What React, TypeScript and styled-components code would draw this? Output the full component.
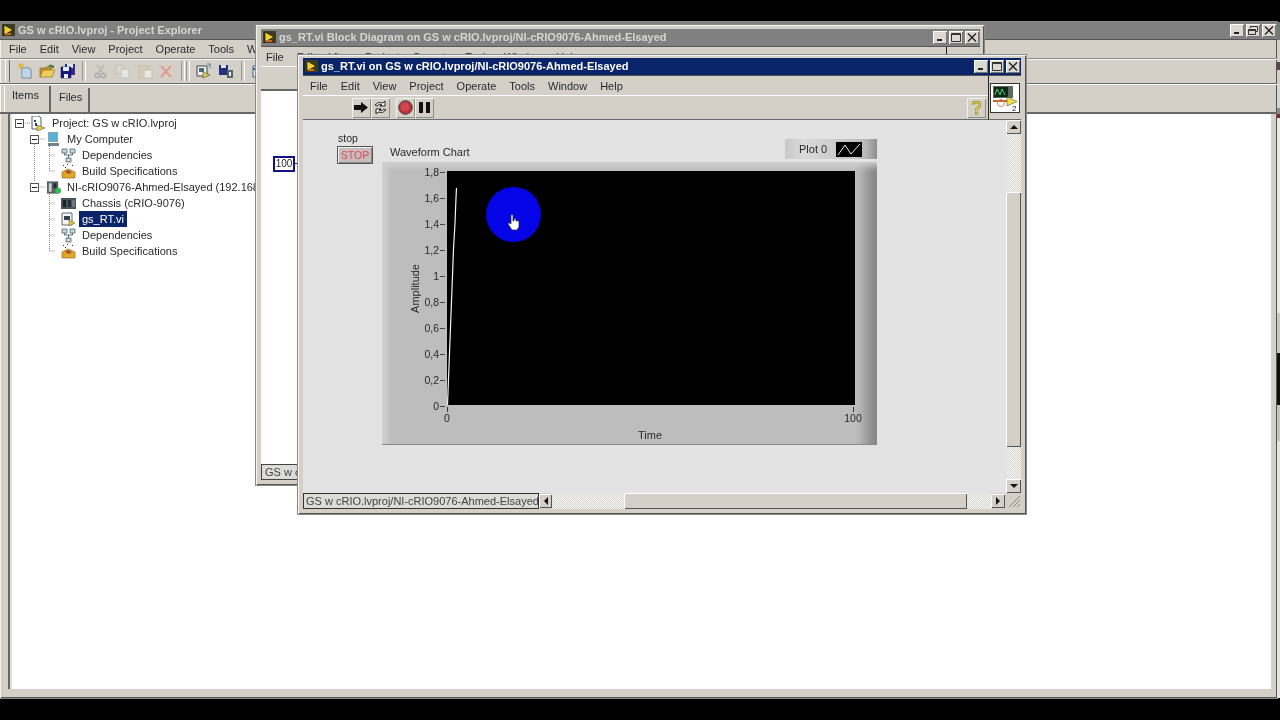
import * as React from "react"

import styled, { createGlobalStyle, css } from "styled-components"

const FACE = "#d4d0c8"
const raised = css`
  background: ${FACE};
  box-shadow: inset 1px 1px 0 #fff, inset -1px -1px 0 #555;
`
const dither = css`
  background: repeating-conic-gradient(#d8d6d0 0 25%, #f6f6f4 0 50%) 0 0 / 2px 2px;
`

const Global = createGlobalStyle`
  html, body { margin: 0; padding: 0; background: #000; overflow: hidden; }
  body { font-family: "Liberation Sans", Arial, sans-serif; font-size: 11px; color: #2a2a2a; }
`

const Desktop = styled.div`
  position: relative;
  width: 1280px;
  height: 720px;
  background: #000;
  overflow: hidden;
  filter: blur(0.35px);
`

const Win = styled.div<{ $x: number; $y: number; $w: number; $h: number; $pad: string }>`
  position: absolute;
  left: ${p => p.$x}px;
  top: ${p => p.$y}px;
  width: ${p => p.$w}px;
  height: ${p => p.$h}px;
  padding: ${p => p.$pad};
  box-sizing: border-box;
  display: flex;
  flex-direction: column;
  background: ${FACE};
  box-shadow: inset 1px 1px 0 #f4f4f0, inset -1px -1px 0 #555, 0 0 0 1px #8a8a88;
`

const TitleBar = styled.div<{ $active?: boolean }>`
  flex: none;
  height: 18px;
  display: flex;
  align-items: center;
  gap: 3px;
  padding: 0 1px 1px 2px;
  box-sizing: border-box;
  background: ${p => (p.$active ? "#0a246a" : "#808080")};
  color: ${p => (p.$active ? "#fff" : "#d6d6d2")};
  font-weight: bold;
  white-space: nowrap;
  border-bottom: 1px solid #555;
`

const TitleText = styled.span`
  flex: 1;
  overflow: hidden;
`

const WinButtons = styled.div`
  display: flex;
  gap: 2px;
`

const WinBtn = styled.div`
  background: #dcd9d2;
  box-shadow: inset 1px 1px 0 #fff, inset -1px -1px 0 #777;
  width: 14px;
  height: 13px;
  display: flex;
  align-items: center;
  justify-content: center;
`

const MenuBar = styled.div<{ $h: number; $pad: number }>`
  flex: none;
  height: ${p => p.$h}px;
  display: flex;
  align-items: center;
  gap: 13px;
  padding-left: ${p => p.$pad}px;
  white-space: nowrap;
  overflow: hidden;
`

const Strip = styled.div<{ $h: number }>`
  flex: none;
  height: ${p => p.$h}px;
  box-sizing: border-box;
  display: flex;
  align-items: center;
  border-top: 1px solid #fff;
  border-bottom: 1px solid #6a6a6a;
`

const ProjectStrip = styled(Strip)`
  border-top-color: #8e8c86;
  box-shadow: inset 0 1px 0 #f6f6f2;
`

const Grip = styled.div`
  width: 3px;
  height: 22px;
  margin: 0 8px 0 5px;
  border-left: 1px solid #fff;
  border-right: 1px solid #666;
`

const Sep = styled.div<{ $l: number; $r: number }>`
  width: 2px;
  height: 20px;
  margin: 0 ${p => p.$r}px 0 ${p => p.$l}px;
  border-left: 1px solid #999;
  border-right: 1px solid #fff;
`

const ToolSlot = styled.div<{ $gap: number }>`
  display: flex;
  margin-right: ${p => p.$gap}px;
`

const Tabs = styled.div`
  flex: none;
  height: 30px;
  box-sizing: border-box;
  display: flex;
  align-items: flex-start;
  padding: 1px 0 0 4px;
  border-top: 1px solid #fff;
  border-bottom: 2px solid #666;
`

const Tab = styled.div<{ $w: number; $on?: boolean }>`
  width: ${p => p.$w}px;
  height: 26px;
  box-sizing: border-box;
  margin-top: ${p => (p.$on ? 0 : 2)}px;
  padding: ${p => (p.$on ? "2px 0 0 7px" : "2px 0 0 8px")};
  border-left: ${p => (p.$on ? "1px solid #fff" : "0")};
  border-right: 2px solid #666;
  line-height: 14px;
`

const TreePane = styled.div`
  position: relative;
  flex: 1;
  margin: 0 6px 9px 8px;
  padding: 1px 0 0 5px;
  background: #fff;
  border-left: 2px solid #666;
  box-shadow: inset 2px 0 0 #e0e0dc;
`

const TreeLines = styled.svg`
  position: absolute;
  left: -2px;
  top: 1px;
`

const TreeRow = styled.div<{ $depth: number }>`
  position: relative;
  height: 16px;
  display: flex;
  align-items: center;
  padding-left: ${p => p.$depth * 15}px;
  white-space: nowrap;
`

const Expander = styled.div`
  flex: none;
  width: 16px;
  display: flex;
`

const ExpBox = styled.div`
  width: 9px;
  height: 9px;
  box-sizing: border-box;
  border: 1px solid #555;
  background: #fff;
  display: flex;
  align-items: center;
  justify-content: center;
  &::after {
    content: "";
    width: 5px;
    height: 1px;
    background: #222;
  }
`

const TreeIcon = styled.div`
  flex: none;
  width: 15px;
  margin-right: 6px;
  display: flex;
`

const TreeLabel = styled.span<{ $sel?: boolean }>`
  ${p =>
    p.$sel &&
    css`
      background: #0a246a;
      color: #fff;
      margin-left: -3px;
      padding: 2px 3px;
    `}
`

const DiagramMain = styled.div`
  position: relative;
  flex: 1;
  background: #fff;
  border-top: 1px solid #666;
`

const Constant = styled.div`
  position: absolute;
  left: 12px;
  top: 65px;
  width: 22px;
  height: 16px;
  box-sizing: border-box;
  border: 2px solid #10108a;
  background: #fff;
  text-align: center;
  font-size: 10px;
  line-height: 12px;
  &::after {
    content: "";
    position: absolute;
    right: -5px;
    top: 5px;
    width: 3px;
    height: 1px;
    background: #10108a;
  }
`

const DiagramStatus = styled.div`
  flex: none;
  height: 16px;
  box-sizing: border-box;
  padding-left: 3px;
  background: #dcdcd8;
  border: 1px solid #444;
  border-width: 1px 0 1px 1px;
  line-height: 14px;
  white-space: nowrap;
  color: #444;
`

const MenuTick = styled.div`
  position: absolute;
  right: 33px;
  top: 0;
  width: 1px;
  height: 19px;
  background: #222;
`

const DiagramMenu = styled.div`
  position: relative;
  flex: none;
`

const PanelHead = styled.div`
  flex: none;
  display: flex;
`

const PanelBars = styled.div`
  flex: 1;
`

const RunButton = styled.div`
  width: 19px;
  height: 20px;
  display: flex;
  align-items: center;
  justify-content: center;
  background: ${FACE};
  box-shadow: inset 1px 1px 0 #f2f2ee, inset -1px -1px 0 #8c8c88;
`

const RunGroup = styled.div`
  display: flex;
  margin-left: 6px;
`

const RunTools = styled.div`
  flex: 1;
  display: flex;
  padding-left: 49px;
`

const HelpButton = styled(RunButton)`
  margin-right: 2px;
`

const IconColumn = styled.div`
  flex: none;
  width: 33px;
  box-sizing: border-box;
  border-left: 1px solid #222;
  border-bottom: 1px solid #6a6a6a;
  padding: 7px 0 0 1px;
`

const ViIcon = styled.div`
  width: 30px;
  height: 30px;
  background: #fff;
  border: 1px solid #333;
  box-sizing: border-box;
`

const PanelBody = styled.div`
  flex: 1;
  min-height: 0;
  display: flex;
`

const Canvas = styled.div`
  flex: 1;
  display: flex;
  align-items: flex-start;
  padding: 12px 0 0 34px;
  background: #e3e3e3;
`

const StopControl = styled.div`
  flex: none;
  width: 45px;
`

const StopLabel = styled.div`
  line-height: 12px;
  font-size: 10.5px;
  margin: 0 0 2px 1px;
`

const StopButton = styled.div`
  width: 36px;
  height: 18px;
  box-sizing: border-box;
  border: 1px solid #555;
  background: #c8bcbc;
  box-shadow: inset 1px 1px 0 #f0f0f0, inset -1px -1px 0 #888;
  color: #d8505c;
  text-align: center;
  font-size: 10.5px;
  line-height: 17px;
`

const ChartColumn = styled.div`
  flex: none;
  width: 495px;
  margin-top: 7px;
`

const ChartHeader = styled.div`
  height: 23px;
  display: flex;
  justify-content: space-between;
  align-items: flex-start;
`

const ChartName = styled.div`
  margin: 7px 0 0 8px;
  line-height: 13px;
`

const Legend = styled.div`
  width: 92px;
  height: 20px;
  box-sizing: border-box;
  padding-left: 14px;
  display: flex;
  align-items: center;
  gap: 9px;
  background: linear-gradient(90deg, #c8c8c8, #dadada 20%, #c4c4c4 75%, #b8b8b8 88%, #8e8e8e);
`

const LegendSwatch = styled.svg`
  display: block;
`

const ChartPanel = styled.div`
  height: 283px;
  box-sizing: border-box;
  padding-top: 9px;
  display: grid;
  grid-template-columns: 65px 408px;
  grid-template-rows: 234px 1fr;
  background:
    linear-gradient(90deg, #d2d2d2, #bdbdbd 10px, #bdbdbd 473px, #b4b4b4 478px, #808080 495px);
  border-bottom: 1px solid #888;
  box-shadow: inset 0 8px 6px -4px #d0d0d0;
`

const YAxis = styled.div`
  display: flex;
  padding-left: 27px;
`

const AxisTitle = styled.div`
  flex: none;
  align-self: center;
  width: 13px;
  writing-mode: vertical-rl;
  transform: rotate(180deg);
  line-height: 13px;
`

const YTicks = styled.div`
  flex: 1;
  height: 246px;
  margin-top: -5px;
  padding-right: 2px;
  display: flex;
  flex-direction: column;
  justify-content: space-between;
`

const YTick = styled.div`
  height: 12px;
  line-height: 12px;
  font-size: 10.5px;
  display: flex;
  justify-content: flex-end;
  align-items: center;
  gap: 1px;
  &::after {
    content: "";
    width: 5px;
    height: 1px;
    background: #444;
  }
`

const Plot = styled.svg`
  display: block;
  background: #000;
`

const XAxis = styled.div`
  grid-column: 2;
`

const XMarks = styled.div`
  display: flex;
  justify-content: space-between;
  padding-right: 2px;
  height: 20px;
`

const XMark = styled.div`
  width: 0;
  display: flex;
  flex-direction: column;
  align-items: center;
  font-size: 10.5px;
  line-height: 12px;
  &::before {
    content: "";
    flex: none;
    width: 1px;
    height: 5px;
    margin: 2px 0 0;
    background: #333;
  }
`

const XTitle = styled.div`
  text-align: center;
  margin: 4px 0 0 -2px;
  line-height: 13px;
`

const VScroll = styled.div`
  flex: none;
  width: 15px;
  display: flex;
  flex-direction: column;
  background: ${FACE};
`

const Track = styled.div<{ $grow?: number }>`
  ${dither};
  flex: ${p => p.$grow ?? 1};
`

const ScrollBtn = styled.div<{ $side?: number }>`
  ${raised};
  flex: none;
  width: ${p => p.$side ?? 14}px;
  height: 14px;
  display: flex;
  align-items: center;
  justify-content: center;
`

const VThumb = styled.div`
  ${raised};
  flex: none;
  height: 255px;
`

const HScroll = styled.div`
  flex: none;
  height: 16px;
  display: flex;
  align-items: center;
  background: ${FACE};
`

const PathLabel = styled.div`
  flex: none;
  width: 236px;
  height: 16px;
  box-sizing: border-box;
  padding-left: 2px;
  border: 1px solid #333;
  background: #dcdcd8;
  line-height: 14px;
  white-space: nowrap;
  overflow: hidden;
  color: #444;
`

const HTrack = styled.div<{ $w: number }>`
  ${dither};
  flex: none;
  width: ${p => p.$w}px;
  height: 16px;
`

const HThumb = styled.div`
  ${raised};
  flex: none;
  width: 343px;
  height: 16px;
`

const Corner = styled.svg`
  display: block;
  flex: none;
  margin-left: auto;
`

const Spot = styled.div`
  position: absolute;
  left: 486px;
  top: 187px;
  width: 55px;
  height: 55px;
  border-radius: 50%;
  background: #0404e6;
  display: flex;
  align-items: center;
  justify-content: center;
`

const Cursor = styled.svg`
  display: block;
  margin: 15px 0 0 1px;
`

const EdgeStrip = styled.div`
  position: absolute;
  left: 1277px;
  top: 22px;
  width: 3px;
  height: 676px;
  display: flex;
  flex-direction: column;
`

const EdgeBand = styled.div<{ $h: number; $c: string }>`
  flex: none;
  height: ${p => p.$h}px;
  background: ${p => p.$c};
`

const Ic = ({ children, w = 15, h = 15 }: { children: React.ReactNode; w?: number; h?: number }) => (
  <svg width={w} height={h} viewBox={`0 0 ${w} ${h}`} style={{ display: "block" }}>
    {children}
  </svg>
)

const LvLogo = () => (
  <Ic w={13} h={12}>
    <rect width="13" height="12" fill="#3c3c20" />
    <path d="M2 1l9 5-9 5z" fill="#f0d030" stroke="#000" strokeWidth=".6" />
    <path d="M3 9h6v2H3z" fill="#c86a20" />
  </Ic>
)

const MinGlyph = () => (
  <Ic w={8} h={8}>
    <rect x="1" y="6" width="5" height="2" fill="#222" />
  </Ic>
)
const MaxGlyph = () => (
  <Ic w={10} h={9}>
    <path d="M.5 .5h9v8h-9zM.5 1.500h9" fill="none" stroke="#333" />
  </Ic>
)
const RestoreGlyph = () => (
  <Ic w={10} h={9}>
    <path d="M2.500 2V.5h7v5H8M.5 3.500h7v5h-7zM.5 4.500h7" fill="none" stroke="#333" />
  </Ic>
)
const CloseGlyph = () => (
  <Ic w={10} h={9}>
    <path d="M1 .5l8 8M9 .5l-8 8" stroke="#222" strokeWidth="1.4" />
  </Ic>
)

const Buttons = ({ restore }: { restore?: boolean }) => (
  <WinButtons>
    <WinBtn>
      <MinGlyph />
    </WinBtn>
    <WinBtn>{restore ? <RestoreGlyph /> : <MaxGlyph />}</WinBtn>
    <WinBtn>
      <CloseGlyph />
    </WinBtn>
  </WinButtons>
)

const NewIcon = () => (
  <Ic w={16} h={16}>
    <path d="M4 5h7l2 2v8H4z" fill="#fff" stroke="#5a7c98" />
    <path d="M5 6h7v8H5z" fill="#bcd8ec" />
    <path d="M3 0v6M0 3h6M1 1l4 4M5 1L1 5" stroke="#e0b020" />
  </Ic>
)
const OpenIcon = () => (
  <Ic w={16} h={16}>
    <path d="M1 5h5l1-1h5v3H5L2 14H1z" fill="#c89a30" stroke="#7c5c14" strokeWidth=".6" />
    <path d="M4 7h12l-3 7H1z" fill="#f0cc60" stroke="#8a6a18" strokeWidth=".6" />
    <path d="M9 3q3-3 5 0l1-1v3h-3l1-1q-2-1-3 0" fill="#3c7a3c" />
  </Ic>
)
const SaveIcon = () => (
  <Ic w={16} h={16}>
    <path d="M5 1h10v11H5z" fill="#30308a" />
    <path d="M7 1h6v4H7z" fill="#dfe6f4" />
    <path d="M1 4h10v11H1z" fill="#181880" stroke="#0c0c50" strokeWidth=".5" />
    <path d="M3 4h6v4H3zM4 11h4v4H4z" fill="#e4ecf8" />
  </Ic>
)
const CutIcon = () => (
  <Ic w={13} h={15}>
    <path d="M3 1l6 8M10 1L4 9" stroke="#b8b8b8" strokeWidth="1.4" />
    <circle cx="3.5" cy="11.5" r="2.2" fill="none" stroke="#a8a8a8" strokeWidth="1.3" />
    <circle cx="9.5" cy="11.5" r="2.2" fill="none" stroke="#a8a8a8" strokeWidth="1.3" />
  </Ic>
)
const CopyIcon = () => (
  <Ic w={15} h={15}>
    <path d="M1 1h7v9H1z" fill="#dcd9d2" stroke="#c4c0b8" />
    <path d="M6 5h8v9H6z" fill="#e8e6e0" stroke="#c4c0b8" />
  </Ic>
)
const PasteIcon = () => (
  <Ic w={15} h={15}>
    <path d="M1 2h9v12H1z" fill="#d6ceb8" stroke="#c4bca8" />
    <path d="M6 6h8v8H6z" fill="#ebe8e2" stroke="#c4c0b8" />
  </Ic>
)
const DeleteIcon = () => (
  <Ic w={14} h={15}>
    <path d="M2 2l10 11M12 2L2 13" stroke="#e49a90" strokeWidth="2" />
  </Ic>
)
const DeployIcon = () => (
  <Ic w={16} h={16}>
    <path d="M1 3h10v10H1z" fill="#f0f0f0" stroke="#445" />
    <path d="M3 5h5v4H3z" fill="#4a6a7a" />
    <path d="M7 9l7 3-7 3z" fill="#e8d040" stroke="#333" strokeWidth=".5" />
    <path d="M11 1h3v4" fill="none" stroke="#4878a0" />
  </Ic>
)
const SaveBuildIcon = () => (
  <Ic w={16} h={16}>
    <path d="M1 2h9v10H1z" fill="#24307e" />
    <path d="M3 2h5v3H3z" fill="#dfe6f4" />
    <path d="M9 7h6v8H9z" fill="#566" />
    <path d="M11 9h2v4h-2z" fill="#eee" />
  </Ic>
)
const GridIcon = () => (
  <Ic w={14} h={15}>
    <path d="M1 2h11v11H1z" fill="#e8eef6" stroke="#345a88" />
    <path d="M1 5h11" stroke="#345a88" strokeWidth="2" />
    <path d="M4 8h2v2H4zM8 8h2v2H8z" fill="#345a88" />
  </Ic>
)

const ProjectIcon = () => (
  <Ic>
    <path d="M1 0h7l2 2v11H1z" fill="#fff" stroke="#4c5c78" />
    <path d="M3 4h2v2H3zM4 7h2v3H4z" fill="#27408a" />
    <path d="M6 9l8 3-8 3z" fill="#e8d030" stroke="#444" strokeWidth=".5" />
  </Ic>
)
const ComputerIcon = () => (
  <Ic>
    <rect x="2" y="0" width="10" height="10" fill="#8ca4b8" />
    <rect x="3" y="1" width="8" height="8" fill="#58b0d8" />
    <path d="M2 11h11v3H2z" fill="#70808c" />
  </Ic>
)
const DepsIcon = () => (
  <Ic>
    <path d="M1 1h5v4H1zM9 1h5v4H9zM5 10h5v4H5z" fill="#bcdcd8" stroke="#567" strokeWidth=".8" />
    <path d="M3.500 5v2h8V5M7.500 7v3" fill="none" stroke="#567" />
  </Ic>
)
const BuildIcon = () => (
  <Ic>
    <path d="M1 8l6-3 7 3v6H1z" fill="#e0a828" stroke="#8a6014" strokeWidth=".6" />
    <path d="M4 8l3-2 4 2-3 2z" fill="#b04838" />
    <path d="M2 1h1v1H2zM6 0h1v1H6zM11 1h1v1h-1zM4 3h1v1H4z" fill="#224" />
  </Ic>
)
const TargetIcon = () => (
  <Ic w={16} h={15}>
    <rect x="1" y="1" width="12" height="13" fill="#56605c" />
    <rect x="3" y="3" width="3" height="9" fill="#c8d0cc" />
    <rect x="8" y="3" width="3" height="5" fill="#20282c" />
    <circle cx="13" cy="11" r="3.2" fill="#2cc04c" />
  </Ic>
)
const ChassisIcon = () => (
  <Ic>
    <rect x="0" y="2" width="15" height="11" fill="#48545c" />
    <rect x="2" y="4" width="3" height="7" fill="#182024" />
    <rect x="7" y="4" width="3" height="7" fill="#283034" />
    <rect x="11" y="4" width="3" height="7" fill="#6c787c" />
  </Ic>
)
const ViTreeIcon = () => (
  <Ic>
    <path d="M1 1h10v12H1z" fill="#f4f4f4" stroke="#667" />
    <path d="M3 4h6v4H3z" fill="#38404c" />
    <path d="M8 8l6 3-6 3z" fill="#e8c830" stroke="#555" strokeWidth=".5" />
  </Ic>
)

const Triangle = ({ dir }: { dir: "up" | "down" | "left" | "right" }) => {
  const d = {
    up: "M4 1l4 4H0z",
    down: "M0 1h8L4 5z",
    left: "M5 0v8L1 4z",
    right: "M1 0l4 4-4 4z",
  }[dir]
  const v = dir === "up" || dir === "down"
  return (
    <Ic w={v ? 8 : 6} h={v ? 6 : 8}>
      <path d={d} fill="#111" />
    </Ic>
  )
}

const yLabels = ["1,8", "1,6", "1,4", "1,2", "1", "0,8", "0,6", "0,4", "0,2", "0"]

const tree = [
  { depth: 0, open: true, icon: <ProjectIcon />, label: "Project: GS w cRIO.lvproj" },
  { depth: 1, open: true, icon: <ComputerIcon />, label: "My Computer" },
  { depth: 2, icon: <DepsIcon />, label: "Dependencies" },
  { depth: 2, icon: <BuildIcon />, label: "Build Specifications" },
  { depth: 1, open: true, icon: <TargetIcon />, label: "NI-cRIO9076-Ahmed-Elsayed (192.168.1.2)" },
  { depth: 2, icon: <ChassisIcon />, label: "Chassis (cRIO-9076)" },
  { depth: 2, sel: true, icon: <ViTreeIcon />, label: "gs_RT.vi" },
  { depth: 2, icon: <DepsIcon />, label: "Dependencies" },
  { depth: 2, icon: <BuildIcon />, label: "Build Specifications" },
]

const menus = ["File", "Edit", "View", "Project", "Operate", "Tools", "Window", "Help"]

const edge: [number, string][] = [
  [18, "#6f7a70"],
  [22, "#d4d0c8"],
  [8, "#5a4a50"],
  [14, "#d4d0c8"],
  [24, "#d8d6d0"],
  [6, "#8a8a88"],
  [4, "#7a2a3a"],
  [195, "#eceae6"],
  [40, "#c8c8c8"],
  [52, "#111"],
  [36, "#c4c4c4"],
  [257, "#e4e4e4"],
]

export default function App() {
  return (
    <Desktop>
      <Global />
      <Win $x={0} $y={22} $w={1277} $h={676} $pad="0 0 0 0">
        <TitleBar>
          <LvLogo />
          <TitleText>GS w cRIO.lvproj - Project Explorer</TitleText>
          <Buttons restore />
        </TitleBar>
        <MenuBar $h={18} $pad={9}>
          {menus.map(m => (
            <span key={m}>{m}</span>
          ))}
        </MenuBar>
        <ProjectStrip $h={26}>
          <Grip />
          <ToolSlot $gap={5}>
            <NewIcon />
          </ToolSlot>
          <ToolSlot $gap={5}>
            <OpenIcon />
          </ToolSlot>
          <ToolSlot $gap={0}>
            <SaveIcon />
          </ToolSlot>
          <Sep $l={6} $r={8} />
          <ToolSlot $gap={8}>
            <CutIcon />
          </ToolSlot>
          <ToolSlot $gap={8}>
            <CopyIcon />
          </ToolSlot>
          <ToolSlot $gap={6}>
            <PasteIcon />
          </ToolSlot>
          <ToolSlot $gap={0}>
            <DeleteIcon />
          </ToolSlot>
          <Sep $l={8} $r={1} />
          <Sep $l={0} $r={6} />
          <ToolSlot $gap={6}>
            <DeployIcon />
          </ToolSlot>
          <ToolSlot $gap={0}>
            <SaveBuildIcon />
          </ToolSlot>
          <Sep $l={7} $r={7} />
          <GridIcon />
        </ProjectStrip>
        <Tabs>
          <Tab $w={47} $on>
            Items
          </Tab>
          <Tab $w={39}>Files</Tab>
        </Tabs>
        <TreePane>
          <TreeLines width="60" height="145">
            <path
              d="M26.500 29V67M41.500 29V56H47M41.500 40H47M41.500 77V136H47M41.500 88H47M41.500 104H47M41.500 120H47M17 8h6M31.500 24h6M31.500 72h6"
              fill="none"
              stroke="#888"
              strokeDasharray="1 1"
            />
          </TreeLines>
          {tree.map(row => (
            <TreeRow key={row.label + row.depth + row.sel} $depth={row.depth}>
              <Expander>{row.open && <ExpBox />}</Expander>
              <TreeIcon>{row.icon}</TreeIcon>
              <TreeLabel $sel={row.sel}>{row.label}</TreeLabel>
            </TreeRow>
          ))}
        </TreePane>
      </Win>

      <EdgeStrip>
        {edge.map(([h, c], i) => (
          <EdgeBand key={i} $h={h} $c={c} />
        ))}
      </EdgeStrip>

      <Win $x={256} $y={25} $w={728} $h={460} $pad="4px 4px 5px 5px">
        <TitleBar>
          <LvLogo />
          <TitleText>gs_RT.vi Block Diagram on GS w cRIO.lvproj/NI-cRIO9076-Ahmed-Elsayed</TitleText>
          <Buttons />
        </TitleBar>
        <DiagramMenu>
          <MenuBar $h={19} $pad={5}>
            {menus.map(m => (
              <span key={m}>{m}</span>
            ))}
          </MenuBar>
          <MenuTick />
        </DiagramMenu>
        <Strip $h={24} />
        <DiagramMain>
          <Constant>100</Constant>
        </DiagramMain>
        <DiagramStatus>GS w cRIO.lvproj/NI-cRIO9076-Ahmed-Elsayed</DiagramStatus>
      </Win>

      <Win $x={298} $y={55} $w={728} $h={459} $pad="3px 5px 5px 5px">
        <TitleBar $active>
          <LvLogo />
          <TitleText>gs_RT.vi on GS w cRIO.lvproj/NI-cRIO9076-Ahmed-Elsayed</TitleText>
          <Buttons />
        </TitleBar>
        <PanelHead>
          <PanelBars>
            <MenuBar $h={19} $pad={7}>
              {menus.map(m => (
                <span key={m}>{m}</span>
              ))}
            </MenuBar>
            <Strip $h={25}>
              <RunTools>
                <RunButton>
                  <Ic w={17} h={13}>
                    <path d="M1 4h7V1l7 5.500L8 12V9H1z" fill="#111" />
                  </Ic>
                </RunButton>
                <RunButton>
                  <Ic w={15} h={15}>
                    <path d="M2 5q3-4 8-2l2-2v5H7l2-1q-3-2-5 1zM13 10q-3 4-8 2l-2 2V9h5l-2 1q3 2 5-1z" fill="#fff" stroke="#111" strokeWidth=".9" />
                  </Ic>
                </RunButton>
                <RunGroup>
                  <RunButton>
                    <Ic w={15} h={15}>
                      <circle cx="7.500" cy="7.500" r="6.800" fill="#b83038" stroke="#444" />
                      <circle cx="7" cy="7" r="4.500" fill="#d04650" />
                    </Ic>
                  </RunButton>
                  <RunButton>
                    <Ic w={11} h={11}>
                      <path d="M0 0h4v11H0zM7 0h4v11H7z" fill="#111" />
                    </Ic>
                  </RunButton>
                </RunGroup>
              </RunTools>
              <HelpButton>
                <Ic w={11} h={15}>
                  <path d="M2 5q0-3 3.500-3T9 5q0 2-2 2.800L5.500 9v2" fill="none" stroke="#8a8620" strokeWidth="2.400" />
                  <path d="M2 5q0-3 3.500-3T9 5q0 2-2 2.800L5.500 9v2" fill="none" stroke="#f0e040" strokeWidth="1.100" />
                  <rect x="4.300" y="12" width="2.500" height="2.500" fill="#d8c830" stroke="#776" strokeWidth=".5" />
                </Ic>
              </HelpButton>
            </Strip>
          </PanelBars>
          <IconColumn>
            <ViIcon>
              <Ic w={28} h={28}>
                <rect x="2" y="2" width="20" height="12" fill="#5c6a5c" />
                <rect x="3" y="3" width="14" height="10" fill="#0e2a14" />
                <path d="M4 11l2-6 3 6 2-6 3 6" fill="none" stroke="#58c878" />
                <path d="M2 17h15" stroke="#c86020" strokeWidth="2" />
                <circle cx="10" cy="19" r="3.500" fill="none" stroke="#d08080" />
                <path d="M16 13l10 4.500L16 22z" fill="#f0e040" stroke="#555" strokeWidth=".6" />
                <text x="21" y="27" fontSize="8" fill="#222" fontFamily="Liberation Sans">2</text>
              </Ic>
            </ViIcon>
          </IconColumn>
        </PanelHead>
        <PanelBody>
          <Canvas>
            <StopControl>
              <StopLabel>stop</StopLabel>
              <StopButton>STOP</StopButton>
            </StopControl>
            <ChartColumn>
              <ChartHeader>
                <ChartName>Waveform Chart</ChartName>
                <Legend>
                  <span>Plot 0</span>
                  <LegendSwatch width="26" height="15">
                    <rect width="26" height="15" fill="#000" />
                    <path d="M2 13L9 3l6 9 9-10" fill="none" stroke="#eee" />
                  </LegendSwatch>
                </Legend>
              </ChartHeader>
              <ChartPanel>
                <YAxis>
                  <AxisTitle>Amplitude</AxisTitle>
                  <YTicks>
                    {yLabels.map(l => (
                      <YTick key={l}>{l}</YTick>
                    ))}
                  </YTicks>
                </YAxis>
                <Plot width="408" height="234">
                  <path
                    d="M.5 234L1.500 208 2.500 182 3.500 156 4.500 130 5.500 105 6.500 78 8 52 9 27 9.500 17"
                    fill="none"
                    stroke="#f4f4f4"
                    strokeWidth="1.200"
                  />
                </Plot>
                <XAxis>
                  <XMarks>
                    <XMark>0</XMark>
                    <XMark>100</XMark>
                  </XMarks>
                  <XTitle>Time</XTitle>
                </XAxis>
              </ChartPanel>
            </ChartColumn>
          </Canvas>
          <VScroll>
            <ScrollBtn $side={15}>
              <Triangle dir="up" />
            </ScrollBtn>
            <Track $grow={58} />
            <VThumb />
            <Track $grow={32} />
            <ScrollBtn $side={15}>
              <Triangle dir="down" />
            </ScrollBtn>
          </VScroll>
        </PanelBody>
        <HScroll>
          <PathLabel>GS w cRIO.lvproj/NI-cRIO9076-Ahmed-Elsayed</PathLabel>
          <ScrollBtn $side={13}>
            <Triangle dir="left" />
          </ScrollBtn>
          <HTrack $w={72} />
          <HThumb />
          <HTrack $w={24} />
          <ScrollBtn $side={14}>
            <Triangle dir="right" />
          </ScrollBtn>
          <Corner width="15" height="16">
            <path d="M14 3L3 14M14 7l-7 7M14 11l-3 3" stroke="#888" />
          </Corner>
        </HScroll>
      </Win>

      <Spot>
        <Cursor width="14" height="17" viewBox="0 0 14 17">
          <path
            d="M4 1q1-1 2 0v6h1V5q1-1 2 0v2h1q1-1 2 .5V13l-2 3H5L1 10q0-1.500 1.500-1L4 10z"
            fill="#fff"
            stroke="#222"
            strokeWidth=".7"
          />
        </Cursor>
      </Spot>
    </Desktop>
  )
}
